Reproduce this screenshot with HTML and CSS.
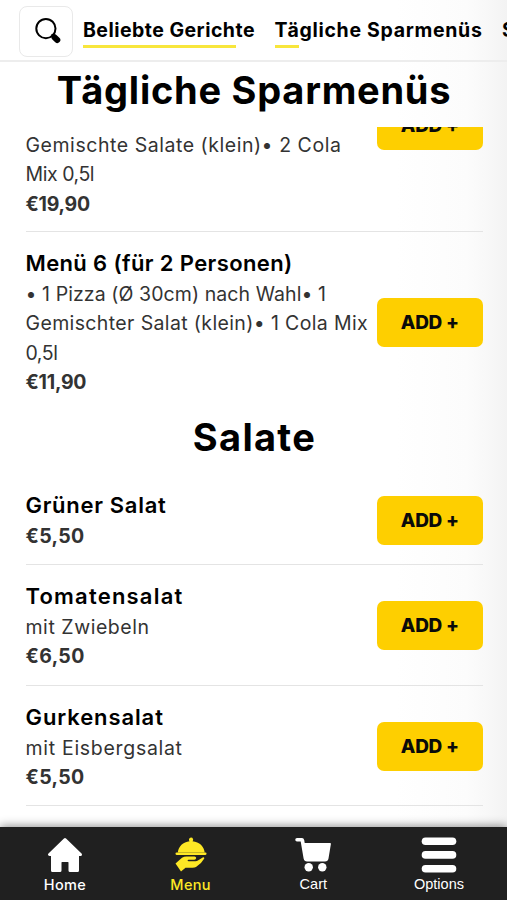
FILE: index.html
```
<!DOCTYPE html>
<html lang="de">
<head>
<meta charset="utf-8">
<title>Speisekarte</title>
<link rel="stylesheet" href="styles.css">
</head>
<body>
<div class="app">
  <header class="topbar">
    <button class="search">
      <svg width="26" height="26" viewBox="0 0 26 26" fill="none" stroke="#000" stroke-linecap="round">
        <circle cx="10.9" cy="10.6" r="9.6" stroke-width="2"/>
        <path d="M17.3 17l2.2 2.2" stroke-width="2.2"/>
        <path d="M19.4 19.3l2.900 2.700" stroke-width="6"/>
      </svg>
    </button>
    <nav class="tabs">
      <a class="tab tab-popular">Beliebte Gerichte</a>
      <a class="tab tab-daily">Tägliche Sparmenüs</a>
      <a class="tab">Salate</a>
    </nav>
  </header>
  <h2 class="heading sticky">Tägliche Sparmenüs</h2>
  <main class="list">
    <article class="row row-cut">
      <div class="info">
        <p class="desc"><span class="ls-5">Gemischte Salate (klein)• 2 Cola</span><br><span class="ls-n4">Mix 0,5l</span></p>
        <p class="price ls-n2">€19,90</p>
      </div>
      <button class="add">ADD +</button>
    </article>
    <article class="row row-last">
      <div class="info">
        <h3 class="name ls-4">Menü 6 (für 2 Personen)</h3>
        <p class="desc"><span class="ls-1">• 1 Pizza (Ø 30cm) nach Wahl• 1</span><br><span class="ls-4">Gemischter Salat (klein)• 1 Cola Mix</span><br><span class="ls-n4">0,5l</span></p>
        <p class="price ls-n2">€11,90</p>
      </div>
      <button class="add">ADD +</button>
    </article>
    <h2 class="heading section">Salate</h2>
    <article class="row">
      <div class="info">
        <h3 class="name ls-7">Grüner Salat</h3>
        <p class="price ls-3">€5,50</p>
      </div>
      <button class="add">ADD +</button>
    </article>
    <article class="row">
      <div class="info">
        <h3 class="name ls-12">Tomatensalat</h3>
        <p class="desc ls-5">mit Zwiebeln</p>
        <p class="price ls-3">€6,50</p>
      </div>
      <button class="add">ADD +</button>
    </article>
    <article class="row">
      <div class="info">
        <h3 class="name ls-9">Gurkensalat</h3>
        <p class="desc ls-7">mit Eisbergsalat</p>
        <p class="price ls-3">€5,50</p>
      </div>
      <button class="add">ADD +</button>
    </article>
  </main>
  <footer class="bottombar">
    <a class="item home">
      <svg width="36" height="36" viewBox="0 0 36 36" fill="#fff" stroke="#fff" stroke-width="3" stroke-linejoin="round">
        <path d="M18 2.5L2.5 17.5H5.5V33.5H13V25.500Q13 23.500 15 23.500H21Q23 23.500 23 25.500V33.500H30.500V17.500H33.500Z"/>
      </svg>
      <span class="ls-4">Home</span>
    </a>
    <a class="item menu">
      <svg width="36" height="36" viewBox="0 0 36 36" fill="#fee825">
        <path d="M18 .5a2.200 2.200 0 0 1 1.500 3.800C26.500 5 31 9.500 31.700 15.500H4.800C5.500 9.500 10 5 16.600 4.300A2.200 2.200 0 0 1 18 .5Z"/>
        <rect x="2.500" y="15.500" width="31" height="2.400" rx="1.100"/>
        <path d="M2.500 26.500L9 20.800Q11 19.400 13.500 19.400H21.500Q23.200 19.600 23.200 21Q23 22.600 21.300 22.700H15.500Q14.600 22.800 14.600 23.500Q14.700 24.200 15.600 24.200H22.500Q24 24.200 25.300 23.200L29.700 20.400Q31.300 19.900 31.300 21.400Q28.500 26.500 23 30Q21.800 30.700 19.500 30.700H12.500L8 34.500Z"/>
      </svg>
      <span class="ls-3">Menu</span>
    </a>
    <a class="item cart">
      <svg width="36" height="36" viewBox="0 0 36 36" fill="#fff">
        <path d="M2 1H7Q8.700 1 9.200 3L9.700 6H35.200Q36 6 35.900 7L33.500 21.500Q33 24.500 30 24.500H12Q9.200 24.500 8.600 21.500L5.700 4.500H2A1.750 1.750 0 0 1 2 1Z"/>
        <circle cx="13.700" cy="30.300" r="4.200"/>
        <circle cx="27.300" cy="30.300" r="4.200"/>
      </svg>
      <span>Cart</span>
    </a>
    <a class="item options">
      <svg width="36" height="36" viewBox="0 0 36 36" fill="#fff">
        <rect x=".7" y=".4" width="34.600" height="7.600" rx="3.800"/>
        <rect x=".7" y="14.100" width="34.600" height="7.600" rx="3.800"/>
        <rect x=".7" y="27.900" width="34.600" height="7.600" rx="3.800"/>
      </svg>
      <span>Options</span>
    </a>
  </footer>
</div>
</body>
</html>
```
FILE: styles.css
```
* { box-sizing: border-box; margin: 0; padding: 0; }

body {
  font-family: Inter, "Open Sans", sans-serif;
  color: #000;
  overflow: hidden;
}

.app {
  display: flex;
  flex-direction: column;
  width: 507px;
  height: 900px;
  overflow: hidden;
  background: linear-gradient(90deg, #fff 78%, #fcfcfc 92%, #f8f8f8 96%, #f3f3f3 100%);
}

.topbar {
  display: flex;
  flex: none;
  align-items: center;
  gap: 10px;
  height: 62px;
  padding-left: 19px;
  border-bottom: 2px solid #ededed;
  overflow: hidden;
}

.search {
  display: flex;
  flex: none;
  align-items: center;
  justify-content: center;
  width: 54px;
  height: 51px;
  margin-top: 2px;
  padding-left: 3px;
  background: #fff;
  border: 1.5px solid #e9e9e9;
  border-radius: 8px;
}

.tabs { display: flex; gap: 19.5px; padding-top: 4px; }

.tab {
  flex: none;
  padding-bottom: 4px;
  font-size: 19.5px;
  font-weight: 700;
  line-height: 27px;
  letter-spacing: .5px;
  white-space: nowrap;
  background: linear-gradient(#f8e63c, #f8e63c) left bottom / 0 3px no-repeat;
}

.tab-popular { width: 172px; letter-spacing: .47px; background-size: 153px 3px; }
.tab-daily { width: 208px; letter-spacing: .69px; background-size: 24px 3px; }

.heading {
  flex: none;
  font-size: 38px;
  font-weight: 700;
  text-align: center;
  white-space: nowrap;
}

.sticky { height: 65px; padding-left: 1px; line-height: 56px; letter-spacing: .75px; }

.section { height: 63px; padding-left: 1px; line-height: 53px; letter-spacing: 1.3px; }

.list { flex: 1; min-height: 0; padding: 0 24.5px 0 25.5px; overflow: hidden; }

.row {
  display: flex;
  align-items: center;
  justify-content: space-between;
  padding: 15px 0 13.1px;
  border-bottom: 1px solid #e4e4e4;
}

.row-cut { align-items: flex-start; padding: 4px 0 12.400px; }
.row-cut .add { margin-top: -30px; }
.row-last { border-bottom: 0; padding-bottom: 13.800px; }

.info { flex: none; width: 350px; white-space: nowrap; }

.name { font-size: 22px; font-weight: 600; line-height: 32.800px; }
.desc, .price { font-size: 19.500px; line-height: 29.300px; color: #333; }
.desc { font-weight: 400; }
.price { font-weight: 700; }

.add {
  flex: none;
  width: 105.500px;
  height: 49px;
  font: 800 19px/49px Inter, sans-serif;
  letter-spacing: -.3px;
  color: #0a0a0a;
  background: #fecf00;
  border: 0;
  border-radius: 7px;
}

.bottombar {
  position: relative;
  display: flex;
  flex: none;
  justify-content: space-between;
  height: 73px;
  padding: 9.500px 32px 0 29px;
  background: #202020;
  box-shadow: 0 -1px 9px rgba(0, 0, 0, .45);
}

.item {
  display: flex;
  flex-direction: column;
  align-items: center;
  width: 72px;
  font-size: 14.500px;
  font-weight: 500;
  line-height: 23px;
  color: #fff;
}

.item svg { flex: none; }
.menu { color: #fee825; padding-left: 2px; }
.cart { padding-right: 2px; }
.cart, .options { font-family: "Liberation Sans", Arial, sans-serif; font-size: 14.500px; font-weight: 400; }

.ls-n4 { letter-spacing: -.45px; }
.ls-n2 { letter-spacing: -.25px; }
.ls-1 { letter-spacing: .08px; }
.ls-3 { letter-spacing: .35px; }
.ls-4 { letter-spacing: .37px; }
.ls-5 { letter-spacing: .54px; }
.ls-7 { letter-spacing: .7px; }
.ls-9 { letter-spacing: .9px; }
.ls-12 { letter-spacing: 1.200px; }
```
